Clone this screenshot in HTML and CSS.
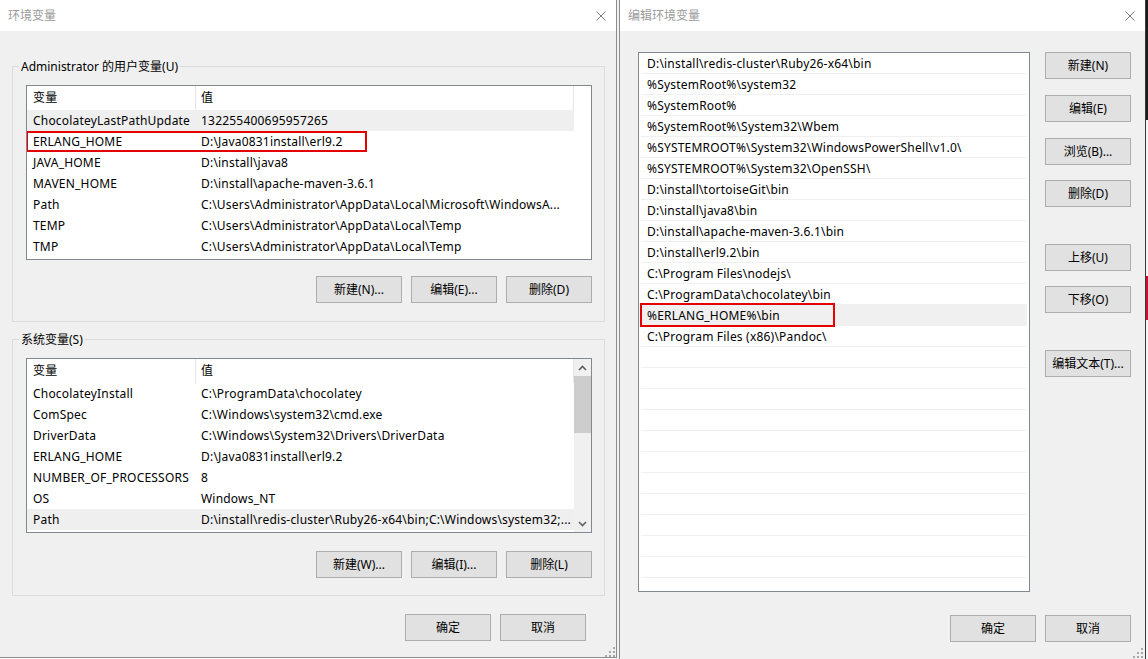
FILE: index.html
```html
<!DOCTYPE html>
<html lang="zh-CN">
<head>
<meta charset="utf-8">
<title>环境变量</title>
<link rel="stylesheet" href="styles.css">
</head>
<body>
<div class="screen">
  <div class="dlg dlg-env">
    <div class="titlebar">
      <span class="title">环境变量</span>
      <svg class="close" width="10" height="10" viewBox="0 0 10 10"><path d="M0.5 0.5 L9.5 9.5 M9.5 0.5 L0.5 9.5" stroke="#7a7a7a" stroke-width="1" fill="none"/></svg>
    </div>
    <div class="env-body">
      <div class="group">
        <div class="legend">Administrator 的用户变量(U)</div>
        <div class="lv">
          <div class="lv-main">
            <div class="lv-head"><div class="c1">变量</div><div class="c2">值</div></div>
            <div class="lv-row sel"><div class="c1">ChocolateyLastPathUpdate</div><div class="c2">132255400695957265</div></div>
            <div class="lv-row"><div class="c1">ERLANG_HOME</div><div class="c2">D:\Java0831install\erl9.2</div><span class="mark mark-user"></span></div>
            <div class="lv-row"><div class="c1">JAVA_HOME</div><div class="c2">D:\install\java8</div></div>
            <div class="lv-row"><div class="c1">MAVEN_HOME</div><div class="c2">D:\install\apache-maven-3.6.1</div></div>
            <div class="lv-row"><div class="c1">Path</div><div class="c2">C:\Users\Administrator\AppData\Local\Microsoft\WindowsA...</div></div>
            <div class="lv-row"><div class="c1">TEMP</div><div class="c2">C:\Users\Administrator\AppData\Local\Temp</div></div>
            <div class="lv-row"><div class="c1">TMP</div><div class="c2">C:\Users\Administrator\AppData\Local\Temp</div></div>
          </div>
          <div class="lv-side"></div>
        </div>
        <div class="btnrow btnrow-user">
          <button class="btn">新建(N)...</button>
          <button class="btn">编辑(E)...</button>
          <button class="btn">删除(D)</button>
        </div>
      </div>
      <div class="group group-sys">
        <div class="legend">系统变量(S)</div>
        <div class="lv">
          <div class="lv-main">
            <div class="lv-head"><div class="c1">变量</div><div class="c2">值</div></div>
            <div class="lv-row"><div class="c1">ChocolateyInstall</div><div class="c2">C:\ProgramData\chocolatey</div></div>
            <div class="lv-row"><div class="c1">ComSpec</div><div class="c2">C:\Windows\system32\cmd.exe</div></div>
            <div class="lv-row"><div class="c1">DriverData</div><div class="c2">C:\Windows\System32\Drivers\DriverData</div></div>
            <div class="lv-row"><div class="c1">ERLANG_HOME</div><div class="c2">D:\Java0831install\erl9.2</div></div>
            <div class="lv-row"><div class="c1">NUMBER_OF_PROCESSORS</div><div class="c2">8</div></div>
            <div class="lv-row"><div class="c1">OS</div><div class="c2">Windows_NT</div></div>
            <div class="lv-row sel"><div class="c1">Path</div><div class="c2">D:\install\redis-cluster\Ruby26-x64\bin;C:\Windows\system32;...</div></div>
          </div>
          <div class="sb">
            <div class="sb-btn"><svg width="9" height="6" viewBox="0 0 9 6"><path d="M1 5 L4.5 1.5 L8 5" stroke="#606060" stroke-width="1.6" fill="none"/></svg></div>
            <div class="sb-thumb"></div>
            <div class="sb-track"></div>
            <div class="sb-btn"><svg width="9" height="6" viewBox="0 0 9 6"><path d="M1 1 L4.5 4.5 L8 1" stroke="#606060" stroke-width="1.6" fill="none"/></svg></div>
          </div>
        </div>
        <div class="btnrow btnrow-sys">
          <button class="btn">新建(W)...</button>
          <button class="btn">编辑(I)...</button>
          <button class="btn">删除(L)</button>
        </div>
      </div>
      <div class="btnrow footer-env">
        <button class="btn">确定</button>
        <button class="btn">取消</button>
      </div>
    </div>
    <svg class="grip grip-env" width="10" height="10" viewBox="0 0 10 10"><g fill="#a8a8a8"><rect x="8" y="0" width="2" height="2"/><rect x="4" y="4" width="2" height="2"/><rect x="8" y="4" width="2" height="2"/><rect x="0" y="8" width="2" height="2"/><rect x="4" y="8" width="2" height="2"/><rect x="8" y="8" width="2" height="2"/></g></svg>
  </div>

  <div class="between"></div>

  <div class="dlg dlg-edit">
    <div class="titlebar">
      <span class="title">编辑环境变量</span>
      <svg class="close" width="10" height="10" viewBox="0 0 10 10"><path d="M0.5 0.5 L9.5 9.5 M9.5 0.5 L0.5 9.5" stroke="#7a7a7a" stroke-width="1" fill="none"/></svg>
    </div>
    <div class="edit-body">
      <div class="edit-main">
        <div class="plist">
          <div class="prow">D:\install\redis-cluster\Ruby26-x64\bin</div>
          <div class="prow">%SystemRoot%\system32</div>
          <div class="prow">%SystemRoot%</div>
          <div class="prow">%SystemRoot%\System32\Wbem</div>
          <div class="prow">%SYSTEMROOT%\System32\WindowsPowerShell\v1.0\</div>
          <div class="prow">%SYSTEMROOT%\System32\OpenSSH\</div>
          <div class="prow">D:\install\tortoiseGit\bin</div>
          <div class="prow">D:\install\java8\bin</div>
          <div class="prow">D:\install\apache-maven-3.6.1\bin</div>
          <div class="prow">D:\install\erl9.2\bin</div>
          <div class="prow">C:\Program Files\nodejs\</div>
          <div class="prow">C:\ProgramData\chocolatey\bin</div>
          <div class="prow sel">%ERLANG_HOME%\bin<span class="mark mark-path"></span></div>
          <div class="prow">C:\Program Files (x86)\Pandoc\</div>
          <div class="prow"></div><div class="prow"></div><div class="prow"></div><div class="prow"></div>
          <div class="prow"></div><div class="prow"></div><div class="prow"></div><div class="prow"></div>
          <div class="prow"></div><div class="prow"></div><div class="prow"></div><div class="prow"></div>
        </div>
        <div class="side-btns">
          <button class="btn">新建(N)</button>
          <button class="btn sb16">编辑(E)</button>
          <button class="btn sb16">浏览(B)...</button>
          <button class="btn sb15">删除(D)</button>
          <button class="btn sb37">上移(U)</button>
          <button class="btn sb15">下移(O)</button>
          <button class="btn sb37">编辑文本(T)...</button>
        </div>
      </div>
      <div class="btnrow footer-edit">
        <button class="btn">确定</button>
        <button class="btn">取消</button>
      </div>
    </div>
    <svg class="grip grip-edit" width="10" height="10" viewBox="0 0 10 10"><g fill="#a8a8a8"><rect x="8" y="0" width="2" height="2"/><rect x="4" y="4" width="2" height="2"/><rect x="8" y="4" width="2" height="2"/><rect x="0" y="8" width="2" height="2"/><rect x="4" y="8" width="2" height="2"/><rect x="8" y="8" width="2" height="2"/></g></svg>
  </div>

  <div class="edge">
    <div class="edge-dark"></div>
    <div class="edge-light"></div>
    <div class="edge-red"></div>
    <div class="edge-rest"></div>
  </div>
</div>
</body>
</html>
```
FILE: styles.css
```css
* { box-sizing: border-box; margin: 0; padding: 0; }
html, body { width: 1148px; height: 659px; overflow: hidden; }
body {
  font-family: "Noto Sans", "Noto Sans CJK SC", sans-serif;
  font-size: 12px;
  color: #000;
  background: #ffffff;
}
.screen { display: flex; align-items: flex-start; width: 1148px; height: 659px; }

.dlg { position: relative; background: #f0f0f0; display: flex; flex-direction: column; }
.dlg-env { width: 617px; height: 658px; border-right: 1px solid #8d8d8d; border-bottom: 1px solid #8d8d8d; }
.between { width: 2px; height: 659px; background: #f0f0f0; }
.dlg-edit { width: 527px; height: 659px; border-left: 1px solid #8d8d8d; border-right: 1px solid #3a3a3a; }

.titlebar {
  height: 31px; background: #fff; display: flex; align-items: center;
  justify-content: space-between; padding-left: 8px; flex: none;
}
.title { color: #9a9a9a; font-size: 12px; line-height: 17px; }
.close { margin-right: 10px; }

/* environment dialog */
.env-body { padding: 35px 0 0 12px; display: flex; flex-direction: column; }
.group {
  width: 593px; border: 1px solid #dcdcdc; padding: 0 12px 18px 13px;
  display: flex; flex-direction: column;
}
.group-sys { margin-top: 17px; padding-bottom: 17px; }
.legend {
  align-self: flex-start; margin: -9px 0 0 -7px; padding: 0 2px;
  background: #f0f0f0; line-height: 17px; height: 17px; white-space: nowrap;
}

.lv {
  margin-top: 10px; width: 566px; height: 175px; border: 1px solid #828790;
  background: #fff; display: flex; overflow: hidden;
}
.lv-main { width: 547px; display: flex; flex-direction: column; letter-spacing: 0.2px; }
.lv-side { width: 17px; }
.lv-head { height: 24px; display: flex; flex: none; }
.lv-head .c1, .lv-head .c2 { border-right: 1px solid #e5e5e5; line-height: 24px; }
.lv-row { position: relative; height: 21px; display: flex; flex: none; line-height: 20px; padding-top: 1px; }
.c1 { width: 169px; padding-left: 6px; white-space: nowrap; overflow: hidden; flex: none; }
.c2 { width: 378px; padding-left: 5px; white-space: nowrap; overflow: hidden; flex: none; }
.sel { background: #efefef; }

.sb { width: 17px; background: #f0f0f0; display: flex; flex-direction: column; }
.sb-btn { height: 17px; display: flex; align-items: center; justify-content: center; flex: none; }
.sb-thumb { height: 57px; background: #cdcdcd; flex: none; }
.sb-track { flex: 1; }

.mark { position: absolute; border: 2px solid #e50000; pointer-events: none; }
.mark-user { left: -1px; top: 0; width: 341px; height: 21px; }
.mark-path { left: -1px; top: -2px; width: 195px; height: 24px; }

.btnrow { display: flex; justify-content: flex-end; gap: 9px; }
.btnrow-user { margin-top: 16px; }
.btnrow-sys { margin-top: 18px; }
.footer-env { margin-top: 18px; width: 604px; padding-right: 30px; }

.btn {
  width: 86px; height: 27px; border: 1px solid #adadad; background: #e1e1e1;
  font-family: inherit; font-size: 12px; color: #000; line-height: 17px;
  display: flex; align-items: center; justify-content: center; flex: none;
}

.grip { position: absolute; }
.grip-env { right: 1px; bottom: 0px; }
.grip-edit { right: 2px; bottom: 1px; }

/* edit dialog */
.edit-body { padding: 21px 14px 0 18px; display: flex; flex-direction: column; }
.edit-main { display: flex; gap: 15px; }
.plist {
  width: 392px; height: 540px; border: 1px solid #828790; background: #fff;
  padding: 0 1px; overflow: hidden; display: flex; flex-direction: column;
  letter-spacing: 0.2px;
}
.prow {
  position: relative; height: 21px; flex: none; border-bottom: 1px solid #f0f0f0;
  line-height: 19px; padding-top: 1px; padding-left: 6px; white-space: nowrap; margin: 0 1px;
}
.prow.sel { background: #f0f0f0; }
.side-btns { display: flex; flex-direction: column; }
.sb16 { margin-top: 16px; }
.sb15 { margin-top: 15px; }
.sb37 { margin-top: 37px; }
.footer-edit { margin-top: 23px; }

/* strip of window behind at right edge */
.edge { width: 2px; height: 659px; display: flex; flex-direction: column; }
.edge-dark { height: 120px; background: #1b1b1b; }
.edge-light { height: 156px; background: #f4f4f4; }
.edge-red { height: 44px; background: #c8102e; }
.edge-rest { flex: 1; background: #f4f4f4; }
```
